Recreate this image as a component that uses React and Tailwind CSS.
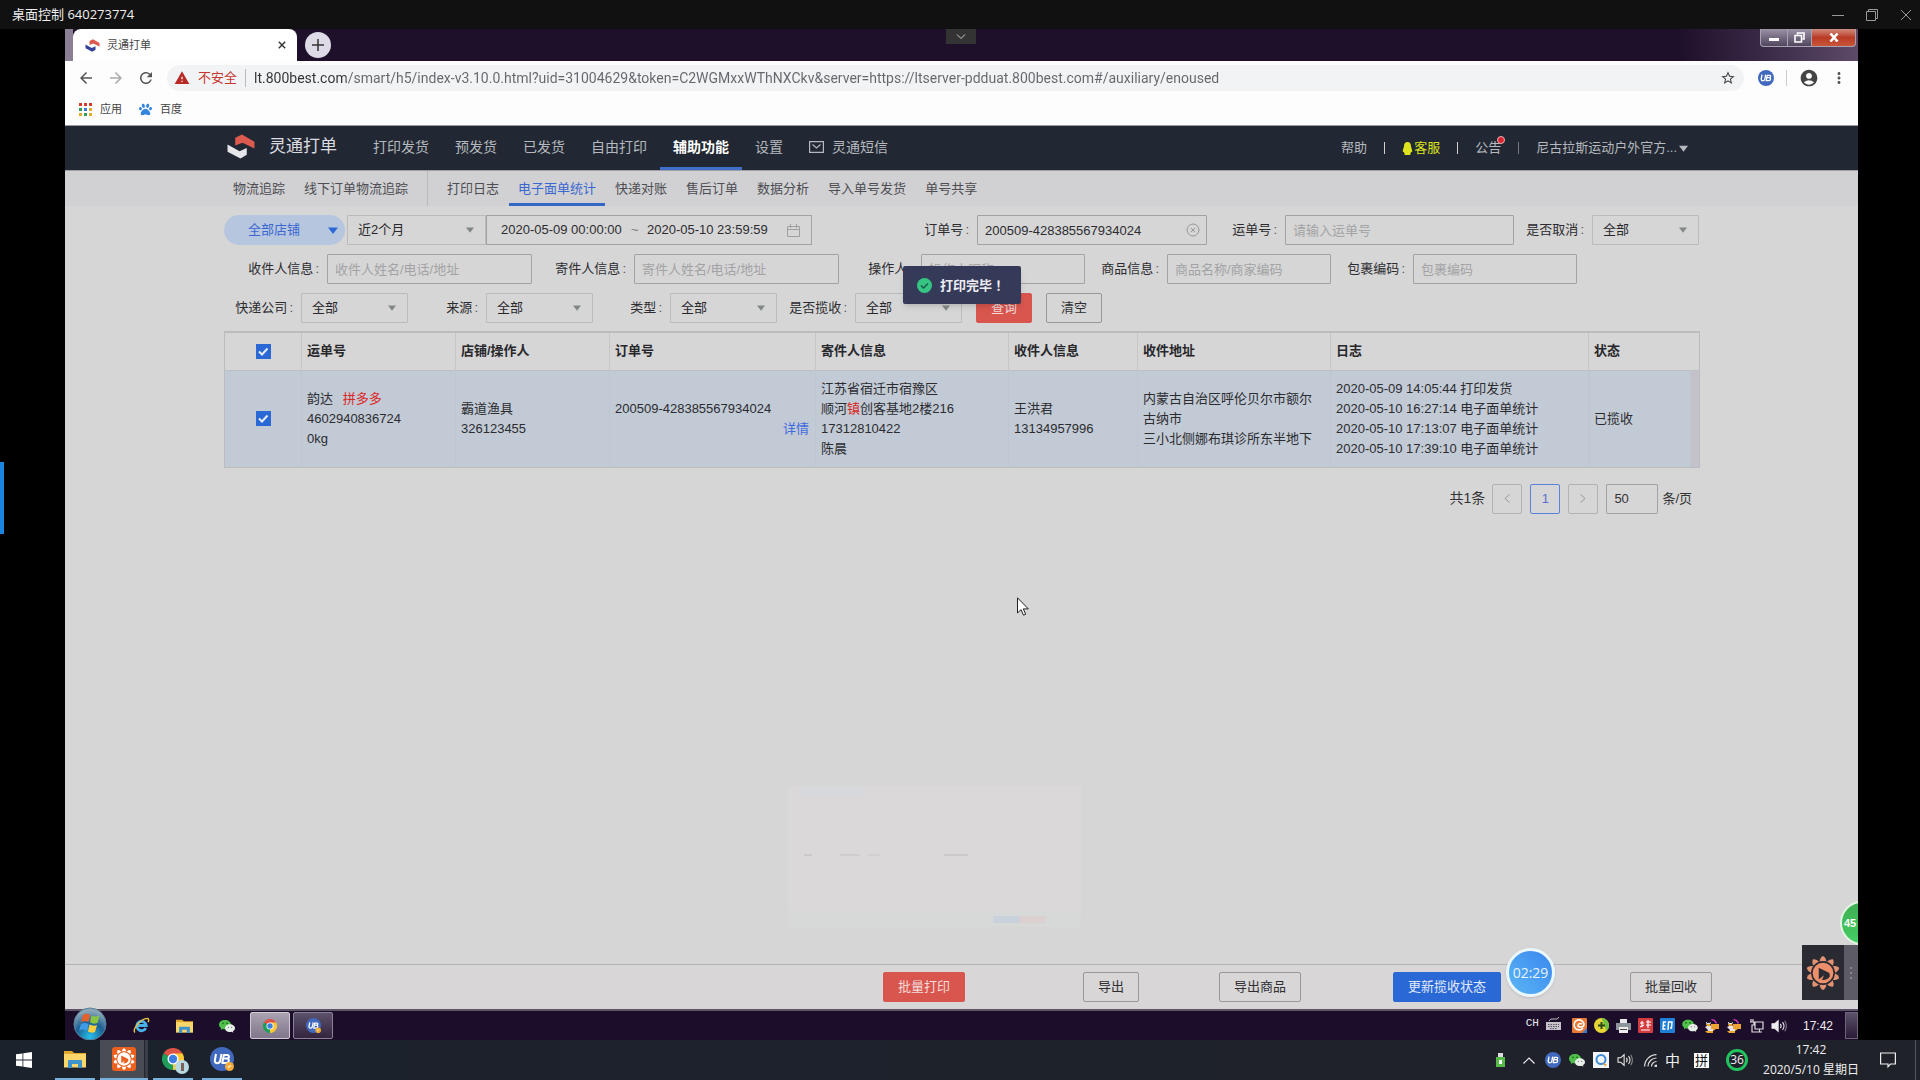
import { useState } from "react";
import { FaPaw } from "react-icons/fa";
import { MdAccountCircle, MdArrowBack, MdArrowForward, MdMoreVert, MdRefresh, MdStarBorder, MdWarning } from "react-icons/md";

const CURRENT_URL =
    "lt.800best.com/smart/h5/index-v3.10.0.html?uid=31004629&token=C2WGMxxWThNXCkv&server=https://ltserver-pdduat.800best.com#/auxiliary/enoused";

const MAIN_NAV = ["打印发货", "预发货", "已发货", "自由打印", "辅助功能", "设置"];
const TRACK_NAV = ["物流追踪", "线下订单物流追踪"];
const SUB_NAV = ["打印日志", "电子面单统计", "快递对账", "售后订单", "数据分析", "导入单号发货", "单号共享"];

const LOGS = [
    "2020-05-09 14:05:44 打印发货",
    "2020-05-10 16:27:14 电子面单统计",
    "2020-05-10 17:13:07 电子面单统计",
    "2020-05-10 17:39:10 电子面单统计",
];

/* ---------- icons ---------- */

function BrandMark({ className, lower = "#e6e6ea" }) {
    return (
        <svg viewBox="0 0 28 26" className={className} aria-hidden="true">
            <path d="M8 4 15 .5 28 8v7L15.500 9 8 12z" fill="#dd5a4f" />
            <path d="M0 11 12.500 18 20 14.500v7L13.500 25.500 0 18.500z" fill={lower} />
        </svg>
    );
}

function UbBadge({ className, coin = false }) {
    return (
        <svg viewBox="0 0 24 24" className={className} aria-hidden="true">
            <circle cx="12" cy="12" r="12" fill="#4169bd" />
            <g fill="none" stroke="#fff" strokeWidth="2" strokeLinejoin="round">
                <path d="M6 7 4.800 13.500c-.3 3.500 5 3.500 5.500 0L11.500 7" />
                <path d="M13.800 8h3.500c2.500 0 2 3.500-.5 3.500h-3.500 3.500c3 0 2.500 4.500-.5 4.500h-4z" />
            </g>
            {coin && <circle cx="19.500" cy="19.500" r="4.500" fill="#f0a93a" />}
            {coin && <path d="m17.800 20.500 3.200-2" stroke="#fbe3ae" strokeWidth="1.500" />}
        </svg>
    );
}

function ChromeIcon({ className }) {
    return (
        <svg viewBox="0 0 24 24" className={className} aria-hidden="true">
            <path d="M12 12 1.600 6A12 12 0 0 1 22.400 6z" fill="#de5246" />
            <path d="M12 12 22.400 6A12 12 0 0 1 12 24z" fill="#fcc934" />
            <path d="M12 12v12A12 12 0 0 1 1.600 6z" fill="#1e9d5b" />
            <path d="M12 6h10.400L17.200 15 12 24z" fill="#fcc934" />
            <circle cx="12" cy="12" r="6" fill="#fff" />
            <circle cx="12" cy="12" r="4.600" fill="#3f7de0" />
        </svg>
    );
}

function WechatIcon({ className }) {
    return (
        <svg viewBox="0 0 24 20" className={className} aria-hidden="true">
            <path d="M9 1C4 1 0 4.100 0 8c0 2.200 1.300 4.100 3.200 5.300L2.500 16l3-1.600c1.100.3 2.300.5 3.500.5 5 0 9-3.100 9-6.900S14 1 9 1z" fill="#4fc04a" />
            <circle cx="6" cy="6" r="1.200" fill="#175c17" />
            <circle cx="12" cy="6" r="1.200" fill="#175c17" />
            <path d="M16.500 7.500c-4.100 0-7.500 2.600-7.500 5.800s3.400 5.700 7.500 5.700c.9 0 1.800-.1 2.600-.4l2.500 1.400-.7-2.300c1.900-1 3.100-2.600 3.100-4.400 0-3.200-3.400-5.800-7.500-5.800z" fill="#e9f0ea" />
            <circle cx="14" cy="12" r=".9" fill="#666" />
            <circle cx="19" cy="12" r=".9" fill="#666" />
        </svg>
    );
}

function FolderIcon({ className }) {
    return (
        <svg viewBox="0 0 22 18" className={className} aria-hidden="true">
            <path d="M0 1h8l2 2h12v14H0z" fill="#e0a92c" />
            <path d="M0 4h22v13.500H0z" fill="#fad66b" />
            <path d="M4 18v-7a1 1 0 0 1 1-1h12a1 1 0 0 1 1 1v7h-4v-4H8v4z" fill="#3f93cc" />
        </svg>
    );
}

function SunLogo({ className, petal, face, mark }) {
    const petals = Array.from({ length: 10 }, (_, i) => i * 36);
    return (
        <svg viewBox="0 0 32 32" className={className} aria-hidden="true">
            {petals.map((deg) => (
                <path key={deg} d="M12.800 5.500Q13 1.500 16 0q3 1.500 3.200 5.500z" fill={petal} transform={`rotate(${deg} 16 16)`} />
            ))}
            <circle cx="16" cy="16" r="10.500" fill={face} stroke={mark} strokeWidth="1.500" />
            <path d="M12 11v11l5-4-2 4.500q5 .5 7.500-3.500l-.5-3z" fill={mark} />
        </svg>
    );
}

function SpeakerIcon({ className, filled = false }) {
    return (
        <svg viewBox="0 0 18 16" className={className} fill="none" stroke="#eee" strokeWidth="1.200" aria-hidden="true">
            <path d="M1 5.500h3L8 2v12l-4-3.500H1z" fill={filled ? "#eee" : "none"} />
            <path d="M10.500 5.500q2 2.500 0 5M13 3.500q3.500 4.500 0 9" />
            <path d="M15.500 2q4 6 0 12" opacity=".5" />
        </svg>
    );
}

function Caret({ className }) {
    return (
        <svg viewBox="0 0 10 7" className={className} fill="currentColor" aria-hidden="true">
            <path d="M0 .5h10L5 7z" />
        </svg>
    );
}

/* ---------- form parts ---------- */

function Label({ htmlFor, className, children }) {
    return (
        <label htmlFor={htmlFor} className={`shrink-0 pr-2 text-right whitespace-nowrap ${className}`}>
            {children}<span className="pl-[2px] text-[#555]">:</span>
        </label>
    );
}

function SelectBox({ id, label, value = "全部", className = "w-[107px]" }) {
    return (
        <div className={`relative h-[30px] shrink-0 ${className}`}>
            <select
                id={id}
                aria-label={label}
                className="h-full w-full appearance-none rounded-[1px] border border-[#bbbbbd] bg-transparent pl-[10px] text-[#28282c]"
            >
                <option>{value}</option>
            </select>
            <Caret className="pointer-events-none absolute top-3 right-3 h-[6px] w-2 text-[#818787]" />
        </div>
    );
}

function TextBox({ id, className, ...rest }) {
    return (
        <input
            id={id}
            type="text"
            className={`h-[30px] shrink-0 rounded-[1px] border border-[#a3a3a6] bg-transparent px-[7px] placeholder:text-[#a3a3a5] ${className}`}
            {...rest}
        />
    );
}

function CheckBox({ label }) {
    const [checked, setChecked] = useState(true);
    return (
        <span className="relative mx-auto block size-[15px]">
            <input
                type="checkbox"
                aria-label={label}
                checked={checked}
                onChange={(e) => setChecked(e.target.checked)}
                className="block size-[15px] appearance-none border border-[#999] checked:border-[#2a68d5] checked:bg-[#2a68d5]"
            />
            {checked && (
                <svg viewBox="0 0 15 15" className="pointer-events-none absolute inset-0" fill="none" stroke="#e6edf8" strokeWidth="2">
                    <path d="m3 7.500 3 3 5.500-6" />
                </svg>
            )}
        </span>
    );
}

function ActionButton({ className, children }) {
    return (
        <button type="button" className={`h-[30px] shrink-0 rounded-[2px] border px-[14px] whitespace-nowrap ${className}`}>
            {children}
        </button>
    );
}

const PLAIN = "border-[#98989c] text-[#2f2f33]";
const RED = "border-[#d9564e] bg-[#d9564e] text-[#f3dcda]";
const BLUE = "border-[#2a68d5] bg-[#2a68d5] text-[#e2eafa]";

/* ---------- browser chrome ---------- */

function BrowserTabs() {
    return (
        <div className="relative flex h-8 items-stretch bg-linear-to-r from-[#1e0f2b] from-90% to-[#5c4a68]">
            <div className="w-2 shrink-0 bg-[#8b7f95]" />
            <div className="flex w-[224px] items-center rounded-t-lg bg-white pr-[7px] pl-3 text-[11px] text-[#444]">
                <BrandMark className="mr-[7px] h-[13px] w-[15px]" lower="#34429a" />
                <span className="flex-1">灵通打单</span>
                <button type="button" aria-label="关闭标签页" className="size-4 p-1">
                    <svg viewBox="0 0 10 10" stroke="#333" strokeWidth="1.800"><path d="m1 1 8 8m0-8-8 8" /></svg>
                </button>
            </div>
            <button type="button" aria-label="新标签页" className="mt-[3px] ml-2 grid size-[26px] place-items-center rounded-full bg-[#dedae6]">
                <svg viewBox="0 0 12 12" className="size-3" stroke="#333" strokeWidth="1.500"><path d="M6 0v12M0 6h12" /></svg>
            </button>
            <div className="absolute top-0 right-[2px] flex h-[18px] overflow-hidden rounded-b-[4px] border border-t-0 border-[#a9a0b0] bg-[#a9a0b0]">
                <button type="button" aria-label="最小化" className="grid w-[26px] place-items-center bg-linear-to-b from-[#9c93a6] to-[#51465f]">
                    <span className="mt-1 h-[3px] w-[10px] bg-white" />
                </button>
                <button type="button" aria-label="还原" className="ml-px grid w-[23px] place-items-center bg-linear-to-b from-[#9c93a6] to-[#51465f]">
                    <svg viewBox="0 0 11 11" className="size-[11px]" fill="none" stroke="#fff" strokeWidth="1.600">
                        <path d="M3.500 2.500V1H10v6H8.500M1 3.500h6.500V10H1z" />
                    </svg>
                </button>
                <button type="button" aria-label="关闭" className="ml-px grid w-[43px] place-items-center bg-linear-to-b from-[#cf8a7d] via-[#b93a25] to-[#c95538]">
                    <svg viewBox="0 0 10 9" className="h-[9px] w-[10px]" stroke="#fff" strokeWidth="2.600"><path d="m1.500 .5 7 8m0-8-7 8" /></svg>
                </button>
            </div>
            <button type="button" aria-label="展开工具栏" className="absolute top-0 left-[881px] grid h-[15px] w-[30px] place-items-center bg-[#333]">
                <svg viewBox="0 0 10 6" className="h-[6px] w-[10px]" fill="none" stroke="#ccc"><path d="m1 .5 4 4 4-4" /></svg>
            </button>
        </div>
    );
}

function BrowserToolbar() {
    return (
        <header className="border-b border-[#999ba0] bg-[#fdfdfe] text-[#555]">
            <div className="flex h-[34px] items-center pr-[10px] pl-3">
                <button type="button" aria-label="后退"><MdArrowBack className="size-[18px]" /></button>
                <button type="button" aria-label="前进" className="ml-3 text-[#aaa]"><MdArrowForward className="size-[18px]" /></button>
                <button type="button" aria-label="刷新" className="ml-3"><MdRefresh className="size-[18px]" /></button>
                <div className="ml-3 flex h-[26px] flex-1 items-center rounded-full bg-[#f2f3f5] pr-2 pl-[7px]">
                    <MdWarning className="size-4 text-[#b82a25]" />
                    <span className="ml-2 text-[13px] text-[#c5372f]">不安全</span>
                    <span className="mx-2 h-[18px] w-px bg-[#bbb]" />
                    <input
                        type="text"
                        aria-label="地址栏"
                        defaultValue={CURRENT_URL}
                        className="h-6 min-w-0 flex-1 bg-linear-to-r from-[#303236] from-[92px] to-[#63666b] to-[92px] bg-clip-text font-['Roboto'] text-sm text-transparent"
                    />
                    <button type="button" aria-label="收藏" className="text-[#444]"><MdStarBorder className="size-4" /></button>
                </div>
                <UbBadge className="ml-[14px] size-4" />
                <span className="mx-3 h-4 w-px bg-[#ccc]" />
                <MdAccountCircle className="size-5 text-[#444]" />
                <button type="button" aria-label="更多" className="ml-[11px]"><MdMoreVert className="size-[18px]" /></button>
            </div>
            <div className="flex h-[30px] items-center gap-2 pb-[2px] pl-[14px] text-[11px] text-[#444]">
                <svg viewBox="0 0 13 13" className="size-[13px]" aria-hidden="true">
                    <path d="M0 0h3v3H0zM5 0h3v3H5zM10 0h3v3h-3z" fill="#d33b2f" />
                    <path d="M0 5h3v3H0zM5 10h3v3H5z" fill="#319a55" />
                    <path d="M5 5h3v3H5z" fill="#3f76d8" />
                    <path d="M10 5h3v3h-3zM0 10h3v3H0zM10 10h3v3h-3z" fill="#e0ab2d" />
                </svg>
                <a href="#apps">应用</a>
                <FaPaw className="ml-[9px] size-[13px] text-[#3385de]" />
                <a href="#baidu">百度</a>
            </div>
        </header>
    );
}

/* ---------- application ---------- */

function MainNav() {
    return (
        <nav className="bg-[#222833] text-[#b5b8be]">
            <div className="mx-auto flex h-11 max-w-[1475px] items-stretch pl-[3px] text-sm">
                <div className="flex items-center gap-[14px] text-[17px] text-[#dcdde0]">
                    <BrandMark className="mb-1 h-[25px] w-7" />
                    <span className="pb-[2px]">灵通打单</span>
                </div>
                <div className="ml-[23px] flex items-stretch">
                    {MAIN_NAV.map((item) => (
                        <a
                            key={item}
                            href="#nav"
                            className={
                                item === "辅助功能"
                                    ? "flex items-center border-b-[3px] border-[#3f6fca] px-[13px] font-bold text-white"
                                    : "flex items-center border-b-[3px] border-transparent px-[13px]"
                            }
                        >
                            {item}
                        </a>
                    ))}
                    <a href="#sms" className="flex items-center gap-2 border-b-[3px] border-transparent px-[13px]">
                        <svg viewBox="0 0 15 12" className="h-3 w-[15px]" fill="none" stroke="currentColor" strokeWidth="1.200">
                            <path d="M.6.6h13.800v10.800H.6zM3.500 3.500l4 3.500 4-3.500" />
                        </svg>
                        灵通短信
                    </a>
                </div>
                <div className="ml-auto flex items-center pr-[11px] text-[13px]">
                    <a href="#help">帮助</a>
                    <span className="mx-[17px] h-3 w-px bg-[#d0d0d0]" />
                    <a href="#service" className="flex items-center gap-px text-[#dde31c]">
                        <svg viewBox="0 0 11 13" className="h-[13px] w-[11px]" fill="currentColor" aria-hidden="true">
                            <path d="M5.500 0C3 0 2 2 2 4 2 5.500 .8 7 .8 9.500c0 1 .5.500.900.300.2.700.6 1.200 1 1.700-.5.4-.5 1.500.6 1.500h4.400c1.100 0 1.100-1.100.6-1.500.4-.5.800-1 1-1.700.4.2.9.7.9-.3C10.200 7 9 5.500 9 4c0-2-1-4-3.500-4z" />
                        </svg>
                        客服
                    </a>
                    <span className="mx-[17px] h-3 w-px bg-[#d0d0d0]" />
                    <a href="#notice" className="relative">
                        公告
                        <span className="absolute top-[-3px] right-[-4px] size-2 rounded-full border border-[#e5b0b0] bg-[#d92531]" />
                    </a>
                    <span className="mx-[17px] h-3 w-px bg-[#777b84]" />
                    <button type="button" className="flex items-center gap-[2px]">
                        尼古拉斯运动户外官方...
                        <Caret className="h-[7px] w-[9px]" />
                    </button>
                </div>
            </div>
        </nav>
    );
}

function SubNav() {
    return (
        <nav className="border-t border-[#9c9fa4] bg-[#d1d1d4] text-[#4d4d52]">
            <div className="mx-auto flex h-[35px] max-w-[1475px] items-stretch gap-px">
                {TRACK_NAV.map((item) => (
                    <a key={item} href="#track" className="flex items-center px-[9px]">{item}</a>
                ))}
                <span className="mx-[9px] w-px bg-[#bababd]" />
                {SUB_NAV.map((item) => (
                    <a
                        key={item}
                        href="#sub"
                        className={
                            item === "电子面单统计"
                                ? "flex items-center px-[9px] text-[#3a68cf] shadow-[inset_0_-3px_0_#3567c4]"
                                : "flex items-center px-[9px]"
                        }
                    >
                        {item}
                    </a>
                ))}
            </div>
        </nav>
    );
}

function Filters() {
    return (
        <form className="flex flex-col gap-[9px] pt-[9px] pb-2" onSubmit={(e) => e.preventDefault()}>
            <div className="flex items-center">
                <div className="relative h-[30px] w-[121px] shrink-0">
                    <select aria-label="店铺" className="h-full w-full appearance-none rounded-full bg-[#b7c6df] pl-6 text-[#3a68d0]">
                        <option>全部店铺</option>
                    </select>
                    <Caret className="pointer-events-none absolute top-3 right-[7px] h-[7px] w-[10px] text-[#2a68d5]" />
                </div>
                <SelectBox id="range" label="时间范围" value="近2个月" className="ml-[2px] w-[139px]" />
                <div className="flex h-[30px] w-[326px] shrink-0 items-center border border-[#a3a3a6] pl-[14px]">
                    <input type="text" aria-label="开始时间" defaultValue="2020-05-09 00:00:00" className="w-[130px]" />
                    <span className="w-4 text-[#777]">~</span>
                    <input type="text" aria-label="结束时间" defaultValue="2020-05-10 23:59:59" className="w-[132px]" />
                    <svg viewBox="0 0 13 13" className="ml-2 size-[13px]" fill="none" stroke="#a0a0a3" aria-hidden="true">
                        <path d="M.5 2.500h12v10H.5zM.5 5.500h12M3.500 0v4M9.500 0v4" />
                    </svg>
                </div>
                <Label htmlFor="order" className="w-[165px]">订单号</Label>
                <div className="relative shrink-0">
                    <TextBox id="order" defaultValue="200509-428385567934024" className="w-[230px]" />
                    <button type="button" aria-label="清除订单号" className="absolute top-2 right-[7px]">
                        <svg viewBox="0 0 14 14" className="size-[14px]" fill="none" stroke="#98989b">
                            <circle cx="7" cy="7" r="6" /><path d="m4.800 4.800 4.400 4.400m0-4.400-4.400 4.400" />
                        </svg>
                    </button>
                </div>
                <Label htmlFor="waybill" className="w-[78px]">运单号</Label>
                <TextBox id="waybill" placeholder="请输入运单号" className="w-[229px]" />
                <Label htmlFor="cancelled" className="w-[78px]">是否取消</Label>
                <SelectBox id="cancelled" />
            </div>
            <div className="flex items-center">
                <Label htmlFor="receiver" className="w-[103px]">收件人信息</Label>
                <TextBox id="receiver" placeholder="收件人姓名/电话/地址" className="w-[205px]" />
                <Label htmlFor="sender" className="w-[102px]">寄件人信息</Label>
                <TextBox id="sender" placeholder="寄件人姓名/电话/地址" className="w-[205px]" />
                <Label htmlFor="operator" className="w-[82px]">操作人</Label>
                <TextBox id="operator" placeholder="操作人昵称" className="w-[164px]" />
                <Label htmlFor="goods" className="w-[82px]">商品信息</Label>
                <TextBox id="goods" placeholder="商品名称/商家编码" className="w-[164px]" />
                <Label htmlFor="parcel" className="w-[82px]">包裹编码</Label>
                <TextBox id="parcel" placeholder="包裹编码" className="w-[164px]" />
            </div>
            <div className="flex items-center">
                <Label htmlFor="company" className="w-[77px]">快递公司</Label>
                <SelectBox id="company" />
                <Label htmlFor="source" className="w-[78px]">来源</Label>
                <SelectBox id="source" />
                <Label htmlFor="kind" className="w-[77px]">类型</Label>
                <SelectBox id="kind" />
                <Label htmlFor="picked" className="w-[78px]">是否揽收</Label>
                <SelectBox id="picked" />
                <span className="ml-[14px] flex gap-[14px]">
                    <ActionButton className={RED}>查询</ActionButton>
                    <ActionButton className={PLAIN}>清空</ActionButton>
                </span>
            </div>
        </form>
    );
}

function OrdersTable() {
    const th = "border-l border-[#c6c6c8] pl-[5px] text-left font-bold text-[#28282c]";
    const td = "border-l border-[#bfc6d0] pl-[5px]";
    return (
        <table className="w-full table-fixed border-collapse border border-t-2 border-[#bcbcbe] leading-5">
            <colgroup>
                <col className="w-[77px]" />
                <col className="w-[154px]" />
                <col className="w-[154px]" />
                <col className="w-[206px]" />
                <col className="w-[193px]" />
                <col className="w-[129px]" />
                <col className="w-[193px]" />
                <col className="w-[258px]" />
                <col className="w-[111px]" />
            </colgroup>
            <thead>
                <tr className="h-[38px]">
                    <th><CheckBox label="全选" /></th>
                    <th className={th}>运单号</th>
                    <th className={th}>店铺/操作人</th>
                    <th className={th}>订单号</th>
                    <th className={th}>寄件人信息</th>
                    <th className={th}>收件人信息</th>
                    <th className={th}>收件地址</th>
                    <th className={th}>日志</th>
                    <th className={th}>状态</th>
                </tr>
            </thead>
            <tbody>
                <tr className="h-[97px] border-t border-[#bcc0c6] bg-[#c2cad5]">
                    <td><CheckBox label="选择运单" /></td>
                    <td className={td}>
                        韵达 <span className="ml-[6px] text-[#dc2626]">拼多多</span>
                        <br />4602940836724
                        <br />0kg
                    </td>
                    <td className={td}>霸道渔具<br />326123455</td>
                    <td className={`${td} pr-[6px]`}>
                        200509-428385567934024
                        <a href="#detail" className="block text-right text-[#4069e0]">详情</a>
                    </td>
                    <td className={td}>
                        江苏省宿迁市宿豫区
                        <br />顺河<span className="text-[#dc2626]">镇</span>创客基地2楼216
                        <br />17312810422
                        <br />陈晨
                    </td>
                    <td className={td}>王洪君<br />13134957996</td>
                    <td className={`${td} pr-4`}>内蒙古自治区呼伦贝尔市额尔古纳市<br />三小北侧娜布琪诊所东半地下</td>
                    <td className={td}>
                        {LOGS.map((log) => <p key={log}>{log}</p>)}
                    </td>
                    <td className={`${td} bg-linear-to-r from-[#c2cad5] from-92% to-[#c3c2cb] to-92%`}>已揽收</td>
                </tr>
            </tbody>
        </table>
    );
}

function Pagination() {
    const box = "grid size-[30px] place-items-center rounded-[2px] border";
    return (
        <div className="mt-4 flex items-center justify-end pr-[7px] text-[#333]">
            <span className="mr-[7px] pb-[2px] text-sm">共1条</span>
            <button type="button" aria-label="上一页" className={`${box} border-[#b2b2b4]`}>
                <svg viewBox="0 0 6 9" className="h-[9px] w-[6px]" fill="none" stroke="#98989b"><path d="M5.500.5 1 4.500l4.500 4" /></svg>
            </button>
            <button type="button" className={`${box} ml-2 border-[#5a82d8] text-[#5a6fd0]`}>1</button>
            <button type="button" aria-label="下一页" className={`${box} ml-2 border-[#b2b2b4]`}>
                <svg viewBox="0 0 6 9" className="h-[9px] w-[6px]" fill="none" stroke="#98989b"><path d="M.5.5 5 4.500l-4.500 4" /></svg>
            </button>
            <TextBox id="page-size" defaultValue="50" className="mr-1 ml-2 w-[52px]" />
            <label htmlFor="page-size">条/页</label>
        </div>
    );
}

function FooterBar() {
    return (
        <footer className="flex h-[45px] items-center justify-end border-t border-[#b3b3b6] bg-[#d8d6d7] pr-[146px]">
            <ActionButton className={RED}>批量打印</ActionButton>
            <ActionButton className={`${PLAIN} ml-[118px]`}>导出</ActionButton>
            <ActionButton className={`${PLAIN} ml-20`}>导出商品</ActionButton>
            <ActionButton className={`${BLUE} ml-[92px]`}>更新揽收状态</ActionButton>
            <ActionButton className={`${PLAIN} ml-[129px]`}>批量回收</ActionButton>
        </footer>
    );
}

/* Everything that floats above the page: toast, fading dialog, pointer, timer, side widgets */
function Overlays() {
    return (
        <>
            <div role="status" className="absolute top-[237px] left-[838px] flex h-[38px] w-[118px] items-center gap-2 rounded-[2px] bg-[#353a58] pl-[14px] text-[13px] font-bold text-[#eeeef2] shadow-md">
                <svg viewBox="0 0 15 15" className="size-[15px] shrink-0" fill="none">
                    <circle cx="7.500" cy="7.500" r="7.500" fill="#35c481" />
                    <path d="m4 7.500 2.500 2.500L11 5.500" stroke="#1f5a48" strokeWidth="1.500" />
                </svg>
                <span className="whitespace-nowrap">打印完毕<span className="font-['Noto_Sans_CJK_TC']" lang="zh-TW">！</span></span>
            </div>
            <div className="absolute top-[757px] left-[723px] flex h-[141px] w-[293px] flex-col justify-end bg-[#dad8d9]">
                <div className="mb-auto ml-3 h-3 w-16 bg-[#d7d8db]" />
                <div className="mb-auto flex gap-2 pl-4">
                    <span className="h-[2px] w-2 bg-[#cccacb]" />
                    <span className="ml-5 h-[2px] w-5 bg-[#cfcdce]" />
                    <span className="h-[2px] w-3 bg-[#d1cfd0]" />
                    <span className="ml-14 h-[2px] w-6 bg-[#cbc9ca]" />
                </div>
                <div className="flex h-4 items-center justify-end bg-[#d6d9d7] pr-9">
                    <span className="h-[7px] w-[26px] bg-[#c8d1dc]" />
                    <span className="h-[7px] w-[26px] bg-[#dccfcf]" />
                </div>
            </div>
            <svg viewBox="0 0 12 19" className="absolute top-[568px] left-[952px] h-[19px] w-3" aria-hidden="true">
                <path d="M.5.8v15.200l3.600-3.300 2.400 5.500 2.200-1-2.400-5.300h5z" fill="#fff" stroke="#222" />
            </svg>
            <div className="absolute right-[303px] bottom-[43px] grid size-[49px] place-items-center rounded-full border-[3px] border-[#eaf7fc] bg-linear-to-bl from-[#3a86ee] to-[#5cb6f5] font-['Open_Sans'] text-sm text-[#e8f3fd] shadow">
                02:29
            </div>
            <div className="absolute right-0 bottom-[95px] h-11 w-[18px] overflow-hidden">
                <div className="flex size-11 items-center rounded-full border-2 border-[#e3f5e3] bg-linear-to-b from-[#3fae52] to-[#46cd63] pl-[2px] text-[11px] font-bold text-white">45</div>
            </div>
            <div className="absolute right-0 bottom-10 flex h-[55px] w-14 items-center bg-[#2a2a33]">
                <SunLogo className="mx-1 size-[34px]" petal="#e29273" face="#ee8f6c" mark="#2a2a33" />
                <div className="flex h-full flex-1 flex-col items-center justify-center gap-[3px] bg-[#5c5b66]">
                    <span className="size-[2px] bg-[#94848a]" />
                    <span className="size-[2px] bg-[#94848a]" />
                    <span className="size-[2px] bg-[#94848a]" />
                </div>
            </div>
        </>
    );
}

/* ---------- taskbars ---------- */

function PenguinIcon() {
    return (
        <svg viewBox="0 0 15 15" className="size-[15px]" aria-hidden="true">
            <path d="M1 4h5l-1 3 3 3v3l-3 1H2l1-2-3-3 2-1z" fill="#e9e2ea" />
            <path d="M2 3h4l-1 2H2z" fill="#222" />
            <path d="M0 13h8v2H2zM1 6h4v2H2z" fill="#e8a62c" />
            <path d="M6 6h8v5h-3l-3 2v-2H6z" fill="#eda433" />
            <path d="m7 1 3 1 2 3-1 1-2-3-3-1z" fill="#d63bc0" />
        </svg>
    );
}

function RemoteTaskbar() {
    return (
        <div className="flex h-[31px] items-center border-t-2 border-[#5d5567] bg-[#1c0d2a] pl-2">
            <button type="button" aria-label="开始" className="-mt-1 size-[34px] shrink-0">
                <svg viewBox="0 0 34 34">
                    <defs>
                        <radialGradient id="orb" cx="50%" cy="90%" r="80%">
                            <stop offset="0" stopColor="#27c0ee" />
                            <stop offset=".55" stopColor="#1b5f94" />
                            <stop offset="1" stopColor="#8aa6b8" />
                        </radialGradient>
                    </defs>
                    <circle cx="17" cy="17" r="16" fill="url(#orb)" stroke="#5b8499" />
                    <path d="M10 8q4-2.500 7 0l-1.500 7q-3.500-2-7.500 0z" fill="#e5602c" />
                    <path d="M18.500 8.500q3.500 2 8 0L24.500 16q-4 1.500-7.500-.5z" fill="#8bc43f" />
                    <path d="M8 17q4-2 7.500 0L14 24q-3.500-2.500-8-.5z" fill="#3f9be6" />
                    <path d="M16.500 17.500q4 2 7.500.5l-2 7q-3.500 1.500-7-.5z" fill="#fbcf3d" />
                </svg>
            </button>
            <svg viewBox="0 0 18 18" className="ml-[26px] size-[17px]" fill="none" aria-hidden="true">
                <path d="M13.500 11.800A5 5 0 1 1 14 9H5" stroke="#49b2ea" strokeWidth="3" />
                <path d="M2 16.500C-1 13 8 2 15 1.500c2.500 0 1.500 3 1 4" stroke="#e8c341" strokeWidth="1.500" />
            </svg>
            <FolderIcon className="ml-[26px] h-[14px] w-[17px]" />
            <WechatIcon className="ml-[26px] h-[14px] w-4" />
            <span className="ml-[15px] grid h-[27px] w-10 place-items-center rounded-[2px] border border-[#cfc9d4] bg-linear-to-b from-[#aaa2b0] to-[#81768b]">
                <ChromeIcon className="size-[14px]" />
            </span>
            <span className="ml-[3px] grid h-[27px] w-10 place-items-center rounded-[2px] border border-[#8a8194] bg-linear-to-b from-[#5d526b] to-[#33243f]">
                <UbBadge className="size-[15px]" coin />
            </span>
            <div className="ml-auto flex items-center gap-[7px] text-xs text-[#eee]">
                <span className="-mt-1 font-['Liberation_Mono'] text-[11px]">CH</span>
                <svg viewBox="0 0 15 13" className="-mt-1 h-[13px] w-[15px]" fill="none" aria-hidden="true">
                    <path d="M3 4q1-3 5-2t5-2" stroke="#bbb" />
                    <path d="M0 5h15v8H0z" fill="#c5c2ca" />
                    <path d="M2 7.500h11M2 9.500h11M4 11.500h7" stroke="#5d5567" strokeDasharray="1.500 1" />
                </svg>
                <svg viewBox="0 0 15 15" className="ml-1 size-[15px]" fill="none" aria-hidden="true">
                    <rect width="15" height="15" rx="1" fill="#e87a35" />
                    <path d="M11 10a5 5 0 1 1 1-4q0 3-3 3T6 7.500q1-3 4-1.500" stroke="#fff" strokeWidth="1.600" />
                    <path d="m10 15 5-5v5z" fill="#3b7ac4" />
                </svg>
                <svg viewBox="0 0 15 15" className="size-[15px]" aria-hidden="true">
                    <circle cx="7.500" cy="7.500" r="7.500" fill="#e8d535" />
                    <path d="M7.500 0a7.500 7.500 0 0 1 5 13z" fill="#72bf42" />
                    <path d="M7.500 4v7M4 7.500h7" stroke="#234916" strokeWidth="2" />
                </svg>
                <svg viewBox="0 0 15 14" className="h-[14px] w-[15px]" aria-hidden="true">
                    <path d="M4 0h7v4H4z" fill="#e8e8e8" />
                    <path d="M0 4h15v7H0z" fill="#8d949c" />
                    <path d="M3 8h9v6H3z" fill="#ededed" />
                    <path d="M4 10h7v1H4z" fill="#444" />
                </svg>
                <svg viewBox="0 0 15 15" className="size-[15px]" fill="none" aria-hidden="true">
                    <rect width="15" height="15" rx="1" fill="#d43c3f" />
                    <path d="M2 5h4M4 3v6M2 9l4-2M8 4h5M10 2v8M8 7h5M3 12h9" stroke="#fff" strokeWidth="1.200" />
                </svg>
                <svg viewBox="0 0 15 15" className="size-[15px]" fill="none" aria-hidden="true">
                    <rect width="15" height="15" rx="1" fill="#1f7fd6" />
                    <path d="M6 4H3.500L3 11h2.500M3 7.500h2.500M8 12l.5-8H12l-.5 6H10" stroke="#fff" strokeWidth="1.400" />
                </svg>
                <WechatIcon className="h-[13px] w-4" />
                <PenguinIcon />
                <PenguinIcon />
                <svg viewBox="0 0 15 14" className="h-[14px] w-[15px]" fill="none" stroke="#ddd" strokeWidth="1.200" aria-hidden="true">
                    <path d="M6 3h8v7H6zM8 13h5M10.500 10v3M2 0v3M4 0v3M1 3h4v3H3v7h5" />
                </svg>
                <SpeakerIcon className="h-[14px] w-4" filled />
                <time className="ml-[9px]">17:42</time>
                <span className="ml-[5px] h-[27px] w-[13px] border border-[#6d6478] bg-linear-to-b from-[#5d526b] to-[#2a1b38]" />
            </div>
        </div>
    );
}

function HostTaskbar() {
    const app = "grid h-full w-10 place-items-center border-b-2 border-[#76b0dc]";
    return (
        <div className="flex h-10 shrink-0 items-center bg-linear-to-r from-[#1b222c] to-[#20222a] font-['Open_Sans','Noto_Sans_CJK_SC',sans-serif] text-xs text-[#f0f0f0]">
            <button type="button" aria-label="开始" className="mr-[23px] ml-4">
                <svg viewBox="0 0 16 16" className="size-4" fill="#fff"><path d="M0 2.300 6.500 1.400v6.200H0zM7.300 1.300 16 0v7.600H7.300zM0 8.400h6.500v6.200L0 13.700zM7.300 8.400H16V16l-8.700-1.300z" /></svg>
            </button>
            <div className="flex h-full items-stretch">
                <button type="button" aria-label="文件资源管理器" className={app}><FolderIcon className="h-[18px] w-[22px]" /></button>
                <button type="button" aria-label="向日葵" className="ml-[5px] flex h-full w-12 border-b-2 border-[#76b0dc] bg-[#3a3d45]">
                    <span className="grid h-full w-[45px] place-items-center border-r border-[#22262e] bg-[#494c54] pl-1">
                        <span className="rounded-[3px] bg-[#e9601f] p-px"><SunLogo className="size-[22px]" petal="#fff" face="#fff" mark="#e9601f" /></span>
                    </span>
                </button>
                <button type="button" aria-label="Chrome" className={`${app} relative ml-[5px]`}>
                    <ChromeIcon className="size-[22px]" />
                    <span className="absolute right-1 bottom-1 grid size-[14px] place-items-center rounded-full bg-[#b9d9e2]">
                        <span className="h-2 w-[3px] bg-[#7a6258]" />
                    </span>
                </button>
                <button type="button" aria-label="UB" className={`${app} ml-[9px]`}><UbBadge className="size-6" coin /></button>
            </div>
            <div className="ml-auto flex items-center gap-2">
                <svg viewBox="0 0 9 14" className="mr-[10px] h-[14px] w-[9px]" aria-hidden="true">
                    <path d="M2 0h5v4H2z" fill="#ddd" /><path d="M0 4h9v10H0z" fill="#57b947" /><path d="M3 7h3v4H3z" fill="#fff" />
                </svg>
                <svg viewBox="0 0 12 7" className="mr-[2px] h-[7px] w-3" fill="none" stroke="#eee" strokeWidth="1.200"><path d="m.5 6.500 5.500-5.500 5.500 5.500" /></svg>
                <UbBadge className="size-4" />
                <WechatIcon className="h-[14px] w-4" />
                <svg viewBox="0 0 16 16" className="size-4" fill="none" aria-hidden="true">
                    <path d="M0 0h16v16H0z" fill="#f4f7fa" />
                    <circle cx="8" cy="7.500" r="4.500" stroke="#3f8cd4" strokeWidth="2" />
                    <path d="m10 11 4 1.500-2 2z" fill="#e8a23a" />
                </svg>
                <SpeakerIcon className="h-[14px] w-4" />
                <svg viewBox="0 0 13 13" className="ml-[3px] size-[13px]" fill="none" stroke="#ddd" strokeWidth="1.200" aria-hidden="true">
                    <path d="M.6 12.500A12 12 0 0 1 12.500.6M4 12.500A8.500 8.500 0 0 1 12.500 4M7.500 12.500a5 5 0 0 1 5-5" /><circle cx="12" cy="12" r="1" fill="#ddd" />
                </svg>
                <span className="text-[15px]">中</span>
                <span className="ml-[6px] bg-white px-px text-[13px] leading-[15px] text-[#111]">拼</span>
                <span className="ml-[9px] grid size-[22px] place-items-center rounded-full border-[3px] border-[#21c45f] text-xs">36</span>
                <time className="ml-[6px] w-[98px] text-center leading-5 whitespace-nowrap">17:42<br />2020/5/10 星期日</time>
                <svg viewBox="0 0 16 16" className="ml-3 size-4" fill="none" stroke="#eee" strokeWidth="1.200" aria-hidden="true">
                    <path d="M.6 1h14.800v11H10.500L8 14.800V12H.6z" />
                </svg>
                <span className="ml-[11px] mr-1 h-10 w-px bg-[#555860]" />
            </div>
        </div>
    );
}

function HostTitleBar() {
    return (
        <div className="flex h-[29px] shrink-0 items-center bg-[#111] pr-2 pl-3 font-['Open_Sans','Noto_Sans_CJK_SC',sans-serif] text-xs text-[#eee]">
            <h1 className="flex-1 text-[13px]">桌面控制 640273774</h1>
            <div className="flex gap-[22px] text-[#999]">
                <button type="button" aria-label="最小化"><svg viewBox="0 0 12 12" className="size-3" stroke="currentColor"><path d="M0 6.500h12" /></svg></button>
                <button type="button" aria-label="还原"><svg viewBox="0 0 12 12" className="size-3" fill="none" stroke="currentColor"><path d="M.5 2.500h9v9h-9zM2.500 2.500v-2h9v9h-2" /></svg></button>
                <button type="button" aria-label="关闭"><svg viewBox="0 0 12 12" className="size-3" stroke="currentColor"><path d="m1 1 10 10m0-10L1 11" /></svg></button>
            </div>
        </div>
    );
}

function App() {
    return (
        <div className="flex min-h-screen flex-col bg-black font-['Liberation_Sans','Noto_Sans_CJK_SC',sans-serif] text-[13px]">
            <HostTitleBar />
            <div className="flex flex-1">
                <div className="flex w-[65px] shrink-0 items-center pb-[74px]">
                    <span className="h-[72px] w-1 bg-[#1b84e0]" />
                </div>
                <div className="relative flex min-w-0 flex-1 flex-col overflow-hidden bg-[#d6d6d6] text-[#2c2c30]">
                    <BrowserTabs />
                    <BrowserToolbar />
                    <MainNav />
                    <SubNav />
                    <main className="mx-auto w-full max-w-[1475px] flex-1">
                        <Filters />
                        <OrdersTable />
                        <Pagination />
                    </main>
                    <FooterBar />
                    <RemoteTaskbar />
                    <Overlays />
                </div>
                <div className="w-[62px] shrink-0" />
            </div>
            <HostTaskbar />
        </div>
    );
}

export default App;
